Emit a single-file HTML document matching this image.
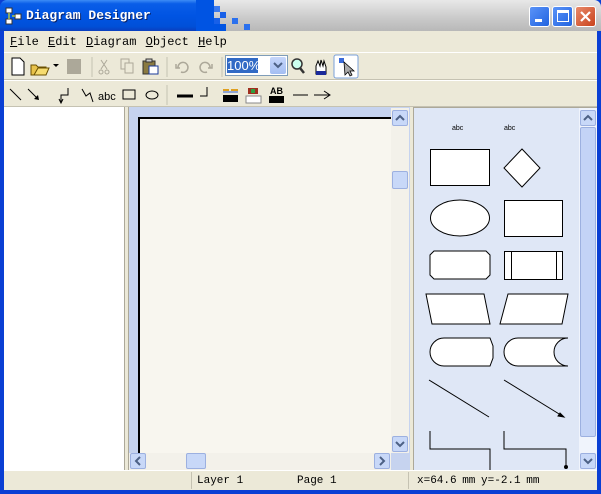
<!DOCTYPE html>
<html><head><meta charset="utf-8"><style>
*{margin:0;padding:0;box-sizing:border-box}
body{width:601px;height:494px;overflow:hidden;background:#0a3fd4;font-family:"Liberation Sans",sans-serif;position:relative}
.a{position:absolute}
.mono{font-family:"Liberation Mono","DejaVu Sans Mono",monospace}
</style></head><body>
<div class="a" style="left:0;top:0;width:601px;height:31px;border-radius:7px 7px 0 0;background:linear-gradient(180deg,#3d8cf6 0%,#0a5ee8 12%,#0054e3 50%,#0050d8 85%,#0a3fbf 100%)"></div>
<div class="a" style="left:200px;top:0;width:401px;height:31px;border-radius:0 7px 0 0;background:linear-gradient(180deg,#e8e8e8,#c9c9c9 60%,#b8b8b8)"></div>
<svg class="a" style="left:196px;top:0" width="70" height="31">
<rect x="0" y="0" width="12" height="31" fill="#0054e3"/>
<rect x="12" y="0" width="6" height="20" fill="#0054e3"/>
<rect x="18" y="6" width="6" height="6" fill="#3a7af0"/>
<rect x="24" y="12" width="6" height="6" fill="#1860e8"/>
<rect x="18" y="18" width="6" height="6" fill="#1860e8"/>
<rect x="36" y="18" width="6" height="6" fill="#2a70ee"/>
<rect x="48" y="24" width="6" height="6" fill="#2a70ee"/>
<rect x="12" y="20" width="6" height="11" fill="#0054e3"/>
<rect x="18" y="24" width="12" height="7" fill="#0054e3"/>
</svg>
<svg class="a" style="left:5px;top:7px" width="18" height="18"><rect x="1" y="1" width="6" height="5" fill="#fff" stroke="#333"/><rect x="10" y="7" width="6" height="5" fill="#fff" stroke="#333"/><rect x="1" y="12" width="6" height="5" fill="#fff" stroke="#333"/><path d="M4 6v6M7 9h3" stroke="#ff0"/></svg>
<div class="a mono" style="left:26px;top:8px;color:#fff;font-weight:bold;font-size:13px;text-shadow:1px 1px #0a246a">Diagram Designer</div>
<div class="a" style="left:529px;top:6px;width:21px;height:21px;border:1px solid #fff;border-radius:3px;background:linear-gradient(135deg,#5a93f8,#2163e0)"><div class="a" style="left:5px;top:12px;width:7px;height:3px;background:#fff"></div></div>
<div class="a" style="left:552px;top:6px;width:21px;height:21px;border:1px solid #fff;border-radius:3px;background:linear-gradient(135deg,#5a93f8,#2163e0)"><div class="a" style="left:4px;top:3px;width:12px;height:12px;border:1px solid #fff;border-top-width:3px"></div></div>
<div class="a" style="left:575px;top:6px;width:21px;height:21px;border:1px solid #fff;border-radius:3px;background:linear-gradient(135deg,#e88a6a,#c9421c)"><svg width="19" height="19"><path d="M5 5l9 9M14 5l-9 9" stroke="#fff" stroke-width="2.2"/></svg></div>
<div class="a" style="left:4px;top:31px;width:593px;height:459px;background:#ece9d8"></div>
<div class="a mono" style="left:10px;top:35px;font-size:12px;color:#000;word-spacing:2px"><u>F</u>ile <u>E</u>dit <u>D</u>iagram <u>O</u>bject <u>H</u>elp</div>
<div class="a" style="left:4px;top:52px;width:593px;height:1px;background:#fff"></div>
<div class="a" style="left:4px;top:79px;width:593px;height:1px;background:#c5c2b2"></div>
<div class="a" style="left:4px;top:80px;width:593px;height:1px;background:#fff"></div>
<div class="a" style="left:4px;top:106px;width:593px;height:1px;background:#c5c2b2"></div>
<svg class="a" style="left:4px;top:53px" width="380" height="27">
<path d="M8 5h8l4 4v13H8z" fill="#fff" stroke="#000"/>
<path d="M27 12h5l2 2h8v8H27z" fill="#e8c24a" stroke="#6a5000"/><path d="M30 22l4-7h11l-3 7z" fill="#f6dc70" stroke="#6a5000"/><path d="M49 11l3 3 3-3z" fill="#000"/>
<rect x="63" y="6" width="14" height="15" fill="#aca899"/>
<line x1="88" y1="4" x2="88" y2="24" stroke="#c5c2b2"/>
<path d="M97 7l6 9M103 7l-6 9" stroke="#aca899"/><circle cx="97" cy="19" r="2" fill="none" stroke="#aca899"/><circle cx="103" cy="19" r="2" fill="none" stroke="#aca899"/>
<rect x="117" y="6" width="8" height="10" fill="none" stroke="#aca899"/><rect x="121" y="10" width="8" height="10" fill="#ece9d8" stroke="#aca899"/>
<rect x="139" y="8" width="12" height="13" fill="#8a7a40" stroke="#333"/><rect x="142" y="6" width="6" height="3" fill="#ccc" stroke="#333"/><rect x="145" y="13" width="9" height="8" fill="#fff" stroke="#1a3a9a"/>
<line x1="163" y1="4" x2="163" y2="24" stroke="#c5c2b2"/>
<path d="M174 15a5 5 0 1 1 3 4M172 11v4h4" fill="none" stroke="#aca899" stroke-width="1.5"/>
<path d="M206 15a5 5 0 1 0 -3 4M208 11v4h-4" fill="none" stroke="#aca899" stroke-width="1.5"/>
<line x1="218" y1="4" x2="218" y2="24" stroke="#c5c2b2"/>
<circle cx="293" cy="11" r="5" fill="#cfe" stroke="#333" stroke-width="1.5"/><path d="M296 15l4 5" stroke="#333" stroke-width="2.5"/>
<path d="M312 21v-8l2-5 2 5 1-6 2 6 1-5 2 6v7z" fill="#fff" stroke="#000"/><rect x="312" y="18" width="10" height="4" fill="#1a2a9a"/>
<rect x="330" y="2" width="24" height="23" rx="2" fill="#fff" stroke="#7aa0d8"/><rect x="335" y="5" width="5" height="5" fill="#3a6ad8"/><path d="M340 9l10 9-4 0 2 4-2 1-2-4-3 3z" fill="#aaa" stroke="#000" stroke-width=".8"/>
</svg>
<div class="a" style="left:225px;top:55px;width:63px;height:21px;border:1px solid #7f9db9;background:#fff"><div class="a" style="left:1px;top:2px;width:31px;height:15px;background:#316ac5;color:#fff;font-size:13px;line-height:15px">100%</div><div class="a" style="left:44px;top:1px;width:16px;height:17px;border-radius:2px;background:linear-gradient(#c6d6fa,#a4bef2)"><svg width="16" height="17"><path d="M4 6l4 4 4-4" fill="none" stroke="#4d6185" stroke-width="2"/></svg></div></div>
<svg class="a" style="left:4px;top:81px" width="340" height="26">
<path d="M6 8l11 11M24 8l10 10" stroke="#000"/><path d="M35 19l-5-1 4-4z" fill="#000"/>
<path d="M64 7v7h-7v7M55 18l2 4 2-4" fill="none" stroke="#000"/>
<path d="M78 8l4 7 4-3 3 9" fill="none" stroke="#000"/>
<text x="94" y="19" font-size="11" font-family="Liberation Sans">abc</text>
<rect x="119" y="9" width="12" height="9" fill="none" stroke="#000"/>
<ellipse cx="148" cy="14" rx="6" ry="4" fill="none" stroke="#000"/>
<line x1="163" y1="4" x2="163" y2="24" stroke="#c5c2b2"/>
<line x1="173" y1="15" x2="189" y2="15" stroke="#000" stroke-width="3"/>
<path d="M196 15h7V6" fill="none" stroke="#000"/>
<rect x="219" y="14" width="15" height="7" fill="#000"/><path d="M219 9h6M227 9h7" stroke="#e0a020" stroke-width="2"/><path d="M219 11h15" stroke="#3060d0"/>
<rect x="242" y="15" width="15" height="7" fill="#fff" stroke="#888"/><rect x="244" y="7" width="10" height="6" fill="#a03020"/><rect x="247" y="8" width="4" height="4" fill="#30a040"/>
<rect x="265" y="15" width="15" height="7" fill="#000"/><text x="266" y="13" font-size="9" font-weight="bold" font-family="Liberation Sans">AB</text>
<line x1="289" y1="14" x2="304" y2="14" stroke="#000"/>
<line x1="310" y1="14" x2="325" y2="14" stroke="#000"/><path d="M320 10l6 4-6 4" fill="none" stroke="#000"/>
</svg>
<div class="a" style="left:4px;top:107px;width:121px;height:363px;background:#fff;border-right:1px solid #aca899"></div>
<div class="a" style="left:128px;top:107px;width:282px;height:363px;border-left:1px solid #aca899;background:#c6d3ef"></div>
<div class="a" style="left:138px;top:117px;width:253px;height:336px;background:#f8f6ef;border-left:2px solid #000;border-top:2px solid #000"></div>
<div class="a" style="left:391px;top:108px;width:18px;height:345px;background:#f3f1ea"></div>
<div class="a" style="left:392px;top:110px;width:16px;height:16px;border:1px solid #9cb0e0;border-radius:2px;background:#c8d8f8"><svg width="14" height="14"><path d="M3 9l4-4 4 4" fill="none" stroke="#4d6185" stroke-width="2"/></svg></div>
<div class="a" style="left:392px;top:171px;width:16px;height:18px;border:1px solid #9cb0e0;border-radius:2px;background:#c8d8f8"></div>
<div class="a" style="left:392px;top:436px;width:16px;height:16px;border:1px solid #9cb0e0;border-radius:2px;background:#c8d8f8"><svg width="14" height="14"><path d="M3 5l4 4 4-4" fill="none" stroke="#4d6185" stroke-width="2"/></svg></div>
<div class="a" style="left:129px;top:453px;width:262px;height:17px;background:#f3f1ea"></div>
<div class="a" style="left:130px;top:453px;width:16px;height:16px;border:1px solid #9cb0e0;border-radius:2px;background:#c8d8f8"><svg width="14" height="14"><path d="M9 3l-4 4 4 4" fill="none" stroke="#4d6185" stroke-width="2"/></svg></div>
<div class="a" style="left:186px;top:453px;width:20px;height:16px;border:1px solid #9cb0e0;border-radius:2px;background:#c8d8f8"></div>
<div class="a" style="left:374px;top:453px;width:16px;height:16px;border:1px solid #9cb0e0;border-radius:2px;background:#c8d8f8"><svg width="14" height="14"><path d="M5 3l4 4-4 4" fill="none" stroke="#4d6185" stroke-width="2"/></svg></div>
<div class="a" style="left:413px;top:107px;width:184px;height:363px;border-left:1px solid #aca899;border-top:1px solid #aca899;background:#dfe7f6"></div>
<div class="a" style="left:579px;top:108px;width:18px;height:362px;background:#f0f4fc"></div>
<div class="a" style="left:580px;top:110px;width:16px;height:16px;border:1px solid #9cb0e0;border-radius:2px;background:#c8d8f8"><svg width="14" height="14"><path d="M3 9l4-4 4 4" fill="none" stroke="#4d6185" stroke-width="2"/></svg></div>
<div class="a" style="left:580px;top:127px;width:16px;height:310px;border:1px solid #9cb0e0;border-radius:2px;background:#c3d3f6"></div>
<div class="a" style="left:580px;top:453px;width:16px;height:16px;border:1px solid #9cb0e0;border-radius:2px;background:#c8d8f8"><svg width="14" height="14"><path d="M3 5l4 4 4-4" fill="none" stroke="#4d6185" stroke-width="2"/></svg></div>
<svg class="a" style="left:414px;top:108px" width="165" height="362" font-family="Liberation Sans">
<g stroke="#000" fill="#fff">
<text x="38" y="22" font-size="7" fill="#000" stroke="none">abc</text>
<text x="90" y="22" font-size="7" fill="#000" stroke="none">abc</text>
<rect x="16.5" y="41.5" width="59" height="36"/>
<path d="M108 41l18 19-18 19-18-19z"/>
<ellipse cx="46" cy="110" rx="29.5" ry="18"/>
<rect x="90.5" y="92.5" width="58" height="36"/>
<path d="M20 143h52l4 4v20l-4 4H20l-4-4v-20z"/>
<rect x="90.5" y="143.5" width="58" height="28"/><path d="M97.5 143v28M142.5 143v28"/>
<path d="M12 186h58l6 30H18z"/>
<path d="M94 186h60l-6 30H86z"/>
<path d="M30 230h46l3 8v12l-3 8H30a14 14 0 0 1 0-28z"/>
<path d="M104 230h50a14 14 0 0 0 0 28h-50a14 14 0 0 1 0-28z"/>
<path d="M15 272l60 37" fill="none"/>
<path d="M90 272l60 37" fill="none"/><path d="M150 309l-6-1 2-3z" fill="#000"/>
<path d="M16 323v18h60v22" fill="none"/>
<path d="M90 323v18h62v18" fill="none"/><circle cx="152" cy="359" r="1.5" fill="#000"/>
</g></svg>
<div class="a" style="left:4px;top:470px;width:593px;height:20px;background:#ece9d8;border-top:1px solid #fff"></div>
<div class="a" style="left:191px;top:472px;width:1px;height:17px;background:#c5c2b2"></div>
<div class="a" style="left:408px;top:472px;width:1px;height:17px;background:#c5c2b2"></div>
<div class="a mono" style="left:197px;top:475px;font-size:11px;color:#000">Layer 1</div>
<div class="a mono" style="left:297px;top:475px;font-size:11px;color:#000">Page 1</div>
<div class="a mono" style="left:417px;top:475px;font-size:11px;color:#000;word-spacing:-1px">x=64.6 mm  y=-2.1 mm</div>
</body></html>
